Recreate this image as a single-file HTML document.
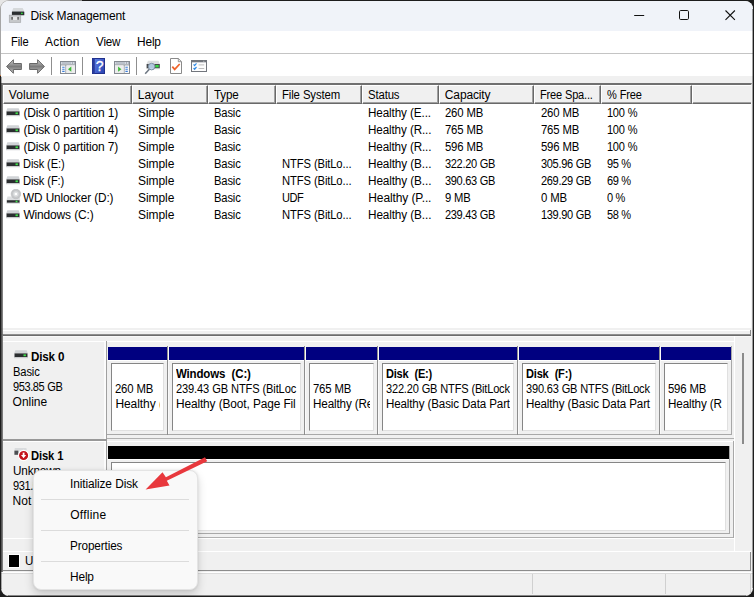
<!DOCTYPE html>
<html lang="en">
<head>
<meta charset="utf-8">
<title>Disk Management</title>
<style>
html,body{margin:0;padding:0;}
body{width:754px;height:597px;overflow:hidden;background:#1d1d1d;font-family:"Liberation Sans",sans-serif;font-size:12px;color:#000;position:relative;}
div,span,svg,i,u{position:absolute;box-sizing:border-box;display:block;}
span{white-space:nowrap;line-height:16px;}
#bgl{left:0;top:0;width:20px;height:76px;background:#e6e6e6;}
#bgt{left:0;top:0;width:60px;height:10px;background:#e6e6e6;}
#bgt2{left:60px;top:0;width:22px;height:1px;background:#8c8c8c;}
#bgr{left:0;top:0;width:60px;height:75px;border-top-left-radius:9px;border-left:1px solid #a6a6a6;border-top:1px solid #b2b2b2;}
#bgo{left:0;top:75px;width:1px;height:1px;background:#c87a3c;}
#winbg{left:1px;top:1px;width:752px;height:595px;background:#f0f0f0;border-radius:8px;overflow:hidden;}
#title{left:0;top:0;width:752px;height:30px;background:#f0f3f9;}
#menubar{left:1px;top:31px;width:752px;height:22px;background:#fff;}
#tbline{left:1px;top:53px;width:752px;height:1px;background:#c4c4c4;}
#toolbar{left:1px;top:54px;width:752px;height:22px;background:#fff;}
.tsep{top:57px;width:1px;height:18px;background:#8f8f8f;}
#list{left:1px;top:83px;width:751px;height:245px;background:#fff;border-left:2px solid #808080;border-top:2px solid #707070;border-right:1px solid #f4f4f4;}
.hc{top:85px;height:19px;background:#f0f0f0;border-top:1px solid #fff;border-left:1px solid #fff;border-right:1px solid #696969;border-bottom:1px solid #696969;}
.hc i{left:0;top:0;right:0;bottom:0;border-right:1px solid #a0a0a0;border-bottom:1px solid #a0a0a0;}
b,.b{font-weight:bold;}
#lower{left:1px;top:334px;width:752px;height:217px;background:#f0f0f0;border-top:2px solid #6c6c6c;border-left:2px solid #7a7a7a;}
#lowtop{left:3px;top:334px;width:748px;height:1px;background:#8e8e8e;}
#lowhi{left:3px;top:336px;width:748px;height:1px;background:#f9f9f9;}
.wl{background:#fff;height:1px;}
.dl{left:3px;width:103px;background:#f0f0f0;border-right:2px solid #fbfbfb;}
.gl{background:#a0a0a0;}
.ph{background:#000080;height:13px;}
.pi{background:#fff;border-left:1px solid #858585;border-top:1px solid #858585;border-right:1px solid #e0e0e0;border-bottom:1px solid #e0e0e0;}
.pc{overflow:hidden;height:60px;}
#menu{left:33px;top:470px;width:165px;height:120px;background:#f9f9f9;border:1px solid #e4e4e4;border-radius:8px;box-shadow:0 5px 10px rgba(0,0,0,0.16),0 0 3px rgba(0,0,0,0.10);}
#menu u{left:7px;width:148px;height:1px;background:#dcdcdc;}
</style>
</head>
<body>
<div id="bgl"></div><div id="bgt"></div><div id="bgt2"></div><div id="bgr"></div><div id="bgo"></div>
<div id="winbg"><div id="title"></div></div>
<svg style="left:8px;top:7px" width="17" height="17" viewBox="0 0 17 17"><path d="M5.300 1h9.400l1.600 3.600H3.900z" fill="#d6d9db"/><rect x="3.900" y="4.500" width="12.400" height="3.700" rx="0.500" fill="#2b2e30"/><circle cx="13.900" cy="6.300" r="0.900" fill="#2fe23a"/><rect x="1.200" y="8.100" width="11.600" height="7.400" fill="#c6c8ca" stroke="#9a9c9e" stroke-width="0.500"/><rect x="3.500" y="10" width="1.300" height="2.700" fill="#3a3a3a"/><rect x="9.300" y="10" width="1.300" height="2.700" fill="#3a3a3a"/><rect x="4.800" y="9.700" width="4.500" height="3.300" fill="#e4e5e6"/></svg>
<span style="left:30.5px;top:8px;line-height:16px;letter-spacing:-0.15px;word-spacing:0.15px;">Disk Management</span>
<svg style="left:631px;top:8px" width="110" height="14" viewBox="0 0 110 14"><path d="M3.200 7.500h10" stroke="#111" stroke-width="1" fill="none"/><rect x="48.500" y="2.500" width="9" height="9" rx="1.200" stroke="#111" stroke-width="1" fill="none"/><path d="M94.500 2.500l9.400 9.400M103.900 2.500l-9.400 9.400" stroke="#111" stroke-width="1.100" fill="none"/></svg>
<div id="menubar"></div>
<span style="left:11px;top:34px;line-height:16px;letter-spacing:-0.14px;transform:scaleX(0.930);transform-origin:0 0;">File</span><span style="left:45px;top:34px;line-height:16px;letter-spacing:0.19px;">Action</span><span style="left:96px;top:34px;line-height:16px;letter-spacing:-0.18px;transform:scaleX(0.970);transform-origin:0 0;">View</span><span style="left:137px;top:34px;line-height:16px;letter-spacing:-0.17px;transform:scaleX(0.992);transform-origin:0 0;">Help</span>
<div id="tbline"></div>
<div id="toolbar"></div>
<svg style="left:6px;top:59px" width="16" height="15" viewBox="0 0 16 15"><defs><linearGradient id="ag6" x1="0" y1="0" x2="0" y2="1"><stop offset="0.1" stop-color="#c2c2c2"/><stop offset="0.5" stop-color="#7c7c7c"/><stop offset="0.9" stop-color="#b6b6b6"/></linearGradient></defs><path d="M0.600 7.500L7.400 0.700V4.500H15.400V10.500H7.400V14.300Z" fill="url(#ag6)" stroke="#686868" stroke-width="1" stroke-linejoin="miter"/></svg>
<svg style="left:29px;top:59px" width="16" height="15" viewBox="0 0 16 15"><defs><linearGradient id="ag29" x1="0" y1="0" x2="0" y2="1"><stop offset="0.1" stop-color="#c2c2c2"/><stop offset="0.5" stop-color="#7c7c7c"/><stop offset="0.9" stop-color="#b6b6b6"/></linearGradient></defs><path transform="translate(16,0) scale(-1,1)" d="M0.600 7.500L7.400 0.700V4.500H15.400V10.500H7.400V14.300Z" fill="url(#ag29)" stroke="#686868" stroke-width="1" stroke-linejoin="miter"/></svg>
<div class="tsep" style="left:51px"></div><div class="tsep" style="left:82px"></div><div class="tsep" style="left:136px"></div>
<svg style="left:60px;top:61px" width="16" height="13" viewBox="0 0 16 13"><rect x="0.5" y="0.5" width="15" height="12" fill="#fbfbfc" stroke="#858a92"/><rect x="1" y="1" width="14" height="2.500" fill="#d3d8e0"/><path d="M2 2h9" stroke="#9ba1ab" stroke-width="0.800"/><path d="M12 2h1M14 2h0.800" stroke="#7e848e" stroke-width="1"/><path d="M1 3.900h14M5.900 4v8.500" stroke="#858a92" stroke-width="0.900" fill="none"/><rect x="6.400" y="4.400" width="8.600" height="7.600" fill="#ededed"/><path d="M11.300 5.600v5.200L8 8.200z" fill="#3db838"/><path d="M2.200 6.200h2.400M2.200 8.300h2.400M2.200 10.400h2.400" stroke="#3b7dd8" stroke-width="1.100"/></svg>
<svg style="left:92px;top:58px" width="13" height="16" viewBox="0 0 13 16"><defs><linearGradient id="hg" x1="0" y1="0" x2="1" y2="0.600"><stop offset="0" stop-color="#6487ea"/><stop offset="1" stop-color="#2f49b8"/></linearGradient></defs><rect x="0.500" y="0.500" width="12" height="15" fill="url(#hg)" stroke="#20308c"/><rect x="0.500" y="0.500" width="2.300" height="15" fill="#2a3c9c"/><text x="7.600" y="13" font-family="Liberation Sans, sans-serif" font-size="14" fill="#fff" stroke="#fff" stroke-width="0.300" text-anchor="middle">?</text></svg>
<svg style="left:114px;top:61px" width="16" height="13" viewBox="0 0 16 13"><rect x="0.5" y="0.5" width="15" height="12" fill="#fbfbfc" stroke="#858a92"/><rect x="1" y="1" width="14" height="2.500" fill="#d3d8e0"/><path d="M2 2h9" stroke="#9ba1ab" stroke-width="0.800"/><path d="M12 2h1M14 2h0.800" stroke="#7e848e" stroke-width="1"/><path d="M1 3.900h14M10.100 4v8.500" stroke="#858a92" stroke-width="0.900" fill="none"/><rect x="1" y="4.400" width="8.600" height="7.600" fill="#ededed"/><path d="M4.100 5.600v5.200l3.300-2.600z" fill="#3db838"/><path d="M11.400 6.200h2.400M11.400 8.300h2.400M11.400 10.400h2.400" stroke="#3b7dd8" stroke-width="1.100"/></svg>
<svg style="left:144px;top:59px" width="17" height="16" viewBox="0 0 17 16"><path d="M4 1.800h10.500l1.300 3.200H2.600z" fill="#dcdee0"/><rect x="2.600" y="5" width="13.200" height="4.400" fill="#45484b"/><rect x="2.600" y="9.400" width="13.200" height="0.800" fill="#c9cbcd"/><rect x="11.300" y="6" width="3.400" height="2.400" fill="#35d943"/><circle cx="7.600" cy="7.600" r="3.300" fill="#bcd6ee" fill-opacity="0.900" stroke="#7d8fa3" stroke-width="1"/><path d="M5.300 10.300L1.200 14.800" stroke="#6d7682" stroke-width="1.500"/></svg>
<svg style="left:170px;top:58px" width="12" height="16" viewBox="0 0 12 16"><path d="M0.500 0.500h7.800l3.200 3.200V15.500H0.500z" fill="#fff" stroke="#8a8a8a"/><path d="M8.300 0.500V3.700h3.200" fill="none" stroke="#8a8a8a" stroke-width="0.900"/><path d="M2.300 8.600l2.400 2.800L9.700 6" fill="none" stroke="#f0642b" stroke-width="1.700"/></svg>
<svg style="left:191px;top:60px" width="16" height="12" viewBox="0 0 16 12"><rect x="0.500" y="0.500" width="15" height="11" fill="#fdfdfd" stroke="#72767d"/><rect x="0.500" y="0.500" width="15" height="1.800" fill="#72767d"/><path d="M12.300 1.300h1" stroke="#d8dade" stroke-width="0.800"/><path d="M2.600 4.400l1 1.200 1.900-2.200M2.600 8l1 1.200 1.900-2.200" fill="none" stroke="#2f8ae6" stroke-width="1.200"/><path d="M7.600 4.900h5.600M7.600 8.500h5.600" stroke="#bdbdbd" stroke-width="1"/></svg>
<div id="list"></div>
<div class="hc" style="left:3px;width:129px"><i></i><span style="left:4.8px;top:1px;line-height:16px;letter-spacing:0.05px;">Volume</span></div>
<div class="hc" style="left:132px;width:76px"><i></i><span style="left:4.8px;top:1px;line-height:16px;letter-spacing:-0.05px;">Layout</span></div>
<div class="hc" style="left:208px;width:68px"><i></i><span style="left:4.8px;top:1px;line-height:16px;letter-spacing:-0.18px;transform:scaleX(0.969);transform-origin:0 0;">Type</span></div>
<div class="hc" style="left:276px;width:86px"><i></i><span style="left:4.8px;top:1px;line-height:16px;letter-spacing:-0.15px;word-spacing:0.15px;transform:scaleX(0.948);transform-origin:0 0;">File System</span></div>
<div class="hc" style="left:362px;width:77px"><i></i><span style="left:4.8px;top:1px;line-height:16px;letter-spacing:-0.14px;transform:scaleX(0.946);transform-origin:0 0;">Status</span></div>
<div class="hc" style="left:439px;width:95px"><i></i><span style="left:4.8px;top:1px;line-height:16px;letter-spacing:-0.13px;">Capacity</span></div>
<div class="hc" style="left:534px;width:67px"><i></i><span style="left:4.8px;top:1px;line-height:16px;letter-spacing:-0.21px;word-spacing:0.21px;transform:scaleX(0.920);transform-origin:0 0;">Free Spa...</span></div>
<div class="hc" style="left:601px;width:91px"><i></i><span style="left:4.8px;top:1px;line-height:16px;letter-spacing:-0.22px;word-spacing:0.22px;transform:scaleX(0.920);transform-origin:0 0;">% Free</span></div>
<div class="hc" style="left:692px;width:59px;border-right:none"><i style="border-right:none"></i></div>
<svg style="left:6px;top:108px" width="14" height="9" viewBox="0 0 14 9"><path d="M1.3 0.2h11.4l1.1 3.4H0.2z" fill="#d0d3d6"/><rect x="0.500" y="3.400" width="13" height="3.700" fill="#2b2e30"/><rect x="9.500" y="4.400" width="2.400" height="1.800" fill="#3fe24a"/><rect x="0" y="7.100" width="14" height="1.100" fill="#c6c8ca"/></svg>
<span style="left:23.4px;top:105px;line-height:17px;letter-spacing:-0.15px;word-spacing:0.15px;">(Disk 0 partition 1)</span>
<span style="left:138.1px;top:105px;line-height:17px;letter-spacing:-0.08px;">Simple</span>
<span style="left:214.4px;top:105px;line-height:17px;letter-spacing:-0.16px;transform:scaleX(0.933);transform-origin:0 0;">Basic</span>
<span style="left:368.3px;top:105px;line-height:17px;letter-spacing:-0.12px;word-spacing:0.12px;transform:scaleX(0.974);transform-origin:0 0;">Healthy (E...</span>
<span style="left:445.2px;top:105px;line-height:17px;letter-spacing:-0.22px;word-spacing:0.22px;transform:scaleX(0.946);transform-origin:0 0;">260 MB</span>
<span style="left:541.4px;top:105px;line-height:17px;letter-spacing:-0.22px;word-spacing:0.22px;transform:scaleX(0.946);transform-origin:0 0;">260 MB</span>
<span style="left:607.4px;top:105px;line-height:17px;letter-spacing:-0.29px;word-spacing:0.29px;transform:scaleX(0.920);transform-origin:0 0;">100 %</span>
<svg style="left:6px;top:125px" width="14" height="9" viewBox="0 0 14 9"><path d="M1.3 0.2h11.4l1.1 3.4H0.2z" fill="#d0d3d6"/><rect x="0.500" y="3.400" width="13" height="3.700" fill="#2b2e30"/><rect x="9.500" y="4.400" width="2.400" height="1.800" fill="#3fe24a"/><rect x="0" y="7.100" width="14" height="1.100" fill="#c6c8ca"/></svg>
<span style="left:23.4px;top:122px;line-height:17px;letter-spacing:-0.15px;word-spacing:0.15px;">(Disk 0 partition 4)</span>
<span style="left:138.1px;top:122px;line-height:17px;letter-spacing:-0.08px;">Simple</span>
<span style="left:214.4px;top:122px;line-height:17px;letter-spacing:-0.16px;transform:scaleX(0.933);transform-origin:0 0;">Basic</span>
<span style="left:368.3px;top:122px;line-height:17px;letter-spacing:-0.12px;word-spacing:0.12px;transform:scaleX(0.971);transform-origin:0 0;">Healthy (R...</span>
<span style="left:445.2px;top:122px;line-height:17px;letter-spacing:-0.22px;word-spacing:0.22px;transform:scaleX(0.946);transform-origin:0 0;">765 MB</span>
<span style="left:541.4px;top:122px;line-height:17px;letter-spacing:-0.22px;word-spacing:0.22px;transform:scaleX(0.946);transform-origin:0 0;">765 MB</span>
<span style="left:607.4px;top:122px;line-height:17px;letter-spacing:-0.29px;word-spacing:0.29px;transform:scaleX(0.920);transform-origin:0 0;">100 %</span>
<svg style="left:6px;top:142px" width="14" height="9" viewBox="0 0 14 9"><path d="M1.3 0.2h11.4l1.1 3.4H0.2z" fill="#d0d3d6"/><rect x="0.500" y="3.400" width="13" height="3.700" fill="#2b2e30"/><rect x="9.500" y="4.400" width="2.400" height="1.800" fill="#3fe24a"/><rect x="0" y="7.100" width="14" height="1.100" fill="#c6c8ca"/></svg>
<span style="left:23.4px;top:139px;line-height:17px;letter-spacing:-0.15px;word-spacing:0.15px;">(Disk 0 partition 7)</span>
<span style="left:138.1px;top:139px;line-height:17px;letter-spacing:-0.08px;">Simple</span>
<span style="left:214.4px;top:139px;line-height:17px;letter-spacing:-0.16px;transform:scaleX(0.933);transform-origin:0 0;">Basic</span>
<span style="left:368.3px;top:139px;line-height:17px;letter-spacing:-0.12px;word-spacing:0.12px;transform:scaleX(0.971);transform-origin:0 0;">Healthy (R...</span>
<span style="left:445.2px;top:139px;line-height:17px;letter-spacing:-0.22px;word-spacing:0.22px;transform:scaleX(0.946);transform-origin:0 0;">596 MB</span>
<span style="left:541.4px;top:139px;line-height:17px;letter-spacing:-0.22px;word-spacing:0.22px;transform:scaleX(0.946);transform-origin:0 0;">596 MB</span>
<span style="left:607.4px;top:139px;line-height:17px;letter-spacing:-0.29px;word-spacing:0.29px;transform:scaleX(0.920);transform-origin:0 0;">100 %</span>
<svg style="left:6px;top:159px" width="14" height="9" viewBox="0 0 14 9"><path d="M1.3 0.2h11.4l1.1 3.4H0.2z" fill="#d0d3d6"/><rect x="0.500" y="3.400" width="13" height="3.700" fill="#2b2e30"/><rect x="9.500" y="4.400" width="2.400" height="1.800" fill="#3fe24a"/><rect x="0" y="7.100" width="14" height="1.100" fill="#c6c8ca"/></svg>
<span style="left:23.4px;top:156px;line-height:17px;letter-spacing:-0.14px;word-spacing:0.14px;transform:scaleX(0.924);transform-origin:0 0;">Disk (E:)</span>
<span style="left:138.1px;top:156px;line-height:17px;letter-spacing:-0.08px;">Simple</span>
<span style="left:214.4px;top:156px;line-height:17px;letter-spacing:-0.16px;transform:scaleX(0.933);transform-origin:0 0;">Basic</span>
<span style="left:282.2px;top:156px;line-height:17px;letter-spacing:-0.14px;word-spacing:0.14px;transform:scaleX(0.936);transform-origin:0 0;">NTFS (BitLo...</span>
<span style="left:368.3px;top:156px;line-height:17px;letter-spacing:-0.12px;word-spacing:0.12px;transform:scaleX(0.980);transform-origin:0 0;">Healthy (B...</span>
<span style="left:445.2px;top:156px;line-height:17px;letter-spacing:-0.37px;word-spacing:0.37px;transform:scaleX(0.920);transform-origin:0 0;">322.20 GB</span>
<span style="left:541.4px;top:156px;line-height:17px;letter-spacing:-0.37px;word-spacing:0.37px;transform:scaleX(0.920);transform-origin:0 0;">305.96 GB</span>
<span style="left:607.4px;top:156px;line-height:17px;letter-spacing:-0.53px;word-spacing:0.53px;transform:scaleX(0.920);transform-origin:0 0;">95 %</span>
<svg style="left:6px;top:176px" width="14" height="9" viewBox="0 0 14 9"><path d="M1.3 0.2h11.4l1.1 3.4H0.2z" fill="#d0d3d6"/><rect x="0.500" y="3.400" width="13" height="3.700" fill="#2b2e30"/><rect x="9.500" y="4.400" width="2.400" height="1.800" fill="#3fe24a"/><rect x="0" y="7.100" width="14" height="1.100" fill="#c6c8ca"/></svg>
<span style="left:23.4px;top:173px;line-height:17px;letter-spacing:-0.14px;word-spacing:0.14px;transform:scaleX(0.931);transform-origin:0 0;">Disk (F:)</span>
<span style="left:138.1px;top:173px;line-height:17px;letter-spacing:-0.08px;">Simple</span>
<span style="left:214.4px;top:173px;line-height:17px;letter-spacing:-0.16px;transform:scaleX(0.933);transform-origin:0 0;">Basic</span>
<span style="left:282.2px;top:173px;line-height:17px;letter-spacing:-0.14px;word-spacing:0.14px;transform:scaleX(0.936);transform-origin:0 0;">NTFS (BitLo...</span>
<span style="left:368.3px;top:173px;line-height:17px;letter-spacing:-0.12px;word-spacing:0.12px;transform:scaleX(0.980);transform-origin:0 0;">Healthy (B...</span>
<span style="left:445.2px;top:173px;line-height:17px;letter-spacing:-0.37px;word-spacing:0.37px;transform:scaleX(0.920);transform-origin:0 0;">390.63 GB</span>
<span style="left:541.4px;top:173px;line-height:17px;letter-spacing:-0.37px;word-spacing:0.37px;transform:scaleX(0.920);transform-origin:0 0;">269.29 GB</span>
<span style="left:607.4px;top:173px;line-height:17px;letter-spacing:-0.53px;word-spacing:0.53px;transform:scaleX(0.920);transform-origin:0 0;">69 %</span>
<svg style="left:6px;top:189px" width="15" height="15" viewBox="0 0 15 15"><path d="M1.500 7.500h12l0.800 3.700H0.500z" fill="#dcdee0"/><rect x="0.800" y="11.200" width="12.800" height="2.600" fill="#2b2e30"/><rect x="9.600" y="11.700" width="1.900" height="1.600" fill="#3fe24a"/><rect x="0.400" y="13.800" width="13.600" height="0.800" fill="#d0d2d4"/><circle cx="9.900" cy="5" r="4.800" fill="#c6c8ca" stroke="#b2b4b6" stroke-width="0.500"/><circle cx="9.900" cy="5" r="2.700" fill="#dddfe1"/><circle cx="9.900" cy="5" r="1.300" fill="#fff"/></svg>
<span style="left:23.4px;top:190px;line-height:17px;letter-spacing:-0.15px;word-spacing:0.15px;transform:scaleX(0.983);transform-origin:0 0;">WD Unlocker (D:)</span>
<span style="left:138.1px;top:190px;line-height:17px;letter-spacing:-0.08px;">Simple</span>
<span style="left:214.4px;top:190px;line-height:17px;letter-spacing:-0.16px;transform:scaleX(0.933);transform-origin:0 0;">Basic</span>
<span style="left:282.2px;top:190px;line-height:17px;letter-spacing:-0.54px;transform:scaleX(0.920);transform-origin:0 0;">UDF</span>
<span style="left:368.3px;top:190px;line-height:17px;letter-spacing:-0.12px;word-spacing:0.12px;">Healthy (P...</span>
<span style="left:445.2px;top:190px;line-height:17px;letter-spacing:-0.30px;word-spacing:0.30px;transform:scaleX(0.937);transform-origin:0 0;">9 MB</span>
<span style="left:541.4px;top:190px;line-height:17px;letter-spacing:-0.30px;word-spacing:0.30px;transform:scaleX(0.948);transform-origin:0 0;">0 MB</span>
<span style="left:607.4px;top:190px;line-height:17px;letter-spacing:-0.69px;word-spacing:0.69px;transform:scaleX(0.920);transform-origin:0 0;">0 %</span>
<svg style="left:6px;top:210px" width="14" height="9" viewBox="0 0 14 9"><path d="M1.3 0.2h11.4l1.1 3.4H0.2z" fill="#d0d3d6"/><rect x="0.500" y="3.400" width="13" height="3.700" fill="#2b2e30"/><rect x="9.500" y="4.400" width="2.400" height="1.800" fill="#3fe24a"/><rect x="0" y="7.100" width="14" height="1.100" fill="#c6c8ca"/></svg>
<span style="left:23.4px;top:207px;line-height:17px;letter-spacing:-0.17px;word-spacing:0.17px;">Windows (C:)</span>
<span style="left:138.1px;top:207px;line-height:17px;letter-spacing:-0.08px;">Simple</span>
<span style="left:214.4px;top:207px;line-height:17px;letter-spacing:-0.16px;transform:scaleX(0.933);transform-origin:0 0;">Basic</span>
<span style="left:282.2px;top:207px;line-height:17px;letter-spacing:-0.14px;word-spacing:0.14px;transform:scaleX(0.936);transform-origin:0 0;">NTFS (BitLo...</span>
<span style="left:368.3px;top:207px;line-height:17px;letter-spacing:-0.12px;word-spacing:0.12px;transform:scaleX(0.980);transform-origin:0 0;">Healthy (B...</span>
<span style="left:445.2px;top:207px;line-height:17px;letter-spacing:-0.37px;word-spacing:0.37px;transform:scaleX(0.920);transform-origin:0 0;">239.43 GB</span>
<span style="left:541.4px;top:207px;line-height:17px;letter-spacing:-0.37px;word-spacing:0.37px;transform:scaleX(0.920);transform-origin:0 0;">139.90 GB</span>
<span style="left:607.4px;top:207px;line-height:17px;letter-spacing:-0.53px;word-spacing:0.53px;transform:scaleX(0.920);transform-origin:0 0;">58 %</span>
<div class="wl" style="left:3px;top:330px;width:748px"></div>
<div style="left:1px;top:328px;width:2px;height:6px;background:#7c7c7c"></div>
<div id="lower"></div><div id="lowtop"></div><div id="lowhi"></div>
<div style="left:750px;top:330px;width:1px;height:5px;background:#8a8a8a"></div><div style="left:751px;top:334px;width:2px;height:2px;background:#f0f0f0"></div>
<div class="wl" style="left:3px;top:341px;width:731px"></div>
<div class="dl" style="top:342px;height:97px"></div>
<div class="gl" style="left:106px;top:341px;width:1px;height:98px"></div>
<div class="gl" style="left:107px;top:438px;width:627px;height:1px;background:#b0b0b0"></div>
<div class="gl" style="left:3px;top:439px;width:104px;height:2px;background:#989898"></div>
<div class="wl" style="left:3px;top:441px;width:731px"></div>
<div class="dl" style="top:442px;height:96px"></div>
<div class="gl" style="left:106px;top:441px;width:1px;height:97px"></div>
<div class="gl" style="left:107px;top:537px;width:627px;height:1px;background:#b0b0b0"></div>
<div class="wl" style="left:3px;top:538px;width:731px"></div>
<div class="gl" style="left:733px;top:441px;width:1px;height:97px;background:#a8a8a8"></div>
<div class="ph" style="left:108px;top:347px;width:59px;background:#000080"></div>
<div class="gl" style="left:107px;top:434px;width:61px;height:1px;background:#a8a8a8"></div>
<div class="gl" style="left:167px;top:346px;width:1px;height:89px;background:#8e8e8e"></div>
<div class="wl" style="left:168px;top:346px;width:1px;height:89px;background:#fafafa"></div>
<div class="wl" style="left:108px;top:360px;width:59px;background:#fff"></div>
<div class="pi" style="left:111px;top:363px;width:53px;height:68px"></div>
<div class="pc" style="left:113px;top:365px;width:46.5px">
<span style="left:2.4px;top:17px;line-height:15px;letter-spacing:-0.22px;word-spacing:0.22px;transform:scaleX(0.946);transform-origin:0 0;">260 MB</span><span style="left:2.4px;top:32px;line-height:15px;letter-spacing:-0.06px;">Healthy (</span>
</div>
<div class="ph" style="left:169px;top:347px;width:135px;background:#000080"></div>
<div class="gl" style="left:168px;top:434px;width:137px;height:1px;background:#a8a8a8"></div>
<div class="gl" style="left:304px;top:346px;width:1px;height:89px;background:#8e8e8e"></div>
<div class="wl" style="left:305px;top:346px;width:1px;height:89px;background:#fafafa"></div>
<div class="wl" style="left:169px;top:360px;width:135px;background:#fff"></div>
<div class="pi" style="left:172px;top:363px;width:129px;height:68px"></div>
<div class="pc" style="left:174px;top:365px;width:122.5px">
<span class="b" style="left:2.4px;top:2px;line-height:15px;letter-spacing:-0.17px;word-spacing:0.17px;transform:scaleX(0.958);transform-origin:0 0;">Windows&nbsp; (C:)</span>
<span style="left:2.4px;top:17px;line-height:15px;letter-spacing:-0.16px;word-spacing:0.16px;transform:scaleX(0.926);transform-origin:0 0;">239.43 GB NTFS (BitLoc</span><span style="left:2.4px;top:32px;line-height:15px;letter-spacing:-0.13px;word-spacing:0.13px;transform:scaleX(0.990);transform-origin:0 0;">Healthy (Boot, Page Fil</span>
</div>
<div class="ph" style="left:306px;top:347px;width:71px;background:#000080"></div>
<div class="gl" style="left:305px;top:434px;width:73px;height:1px;background:#a8a8a8"></div>
<div class="gl" style="left:377px;top:346px;width:1px;height:89px;background:#8e8e8e"></div>
<div class="wl" style="left:378px;top:346px;width:1px;height:89px;background:#fafafa"></div>
<div class="wl" style="left:306px;top:360px;width:71px;background:#fff"></div>
<div class="pi" style="left:309px;top:363px;width:65px;height:68px"></div>
<div class="pc" style="left:311px;top:365px;width:58.5px">
<span style="left:2.4px;top:17px;line-height:15px;letter-spacing:-0.22px;word-spacing:0.22px;transform:scaleX(0.946);transform-origin:0 0;">765 MB</span><span style="left:2.4px;top:32px;line-height:15px;letter-spacing:-0.15px;word-spacing:0.15px;transform:scaleX(0.973);transform-origin:0 0;">Healthy (Re</span>
</div>
<div class="ph" style="left:379px;top:347px;width:138px;background:#000080"></div>
<div class="gl" style="left:378px;top:434px;width:140px;height:1px;background:#a8a8a8"></div>
<div class="gl" style="left:517px;top:346px;width:1px;height:89px;background:#8e8e8e"></div>
<div class="wl" style="left:518px;top:346px;width:1px;height:89px;background:#fafafa"></div>
<div class="wl" style="left:379px;top:360px;width:138px;background:#fff"></div>
<div class="pi" style="left:382px;top:363px;width:132px;height:68px"></div>
<div class="pc" style="left:384px;top:365px;width:125.5px">
<span class="b" style="left:2.4px;top:2px;line-height:15px;letter-spacing:-0.27px;word-spacing:0.27px;transform:scaleX(0.920);transform-origin:0 0;">Disk&nbsp; (E:)</span>
<span style="left:2.4px;top:17px;line-height:15px;letter-spacing:-0.21px;word-spacing:0.21px;transform:scaleX(0.920);transform-origin:0 0;">322.20 GB NTFS (BitLock</span><span style="left:2.4px;top:32px;line-height:15px;letter-spacing:-0.14px;word-spacing:0.14px;transform:scaleX(0.965);transform-origin:0 0;">Healthy (Basic Data Part</span>
</div>
<div class="ph" style="left:519px;top:347px;width:140px;background:#000080"></div>
<div class="gl" style="left:518px;top:434px;width:142px;height:1px;background:#a8a8a8"></div>
<div class="gl" style="left:659px;top:346px;width:1px;height:89px;background:#8e8e8e"></div>
<div class="wl" style="left:660px;top:346px;width:1px;height:89px;background:#fafafa"></div>
<div class="wl" style="left:519px;top:360px;width:140px;background:#fff"></div>
<div class="pi" style="left:522px;top:363px;width:134px;height:68px"></div>
<div class="pc" style="left:524px;top:365px;width:127.5px">
<span class="b" style="left:2.4px;top:2px;line-height:15px;letter-spacing:-0.22px;word-spacing:0.22px;transform:scaleX(0.920);transform-origin:0 0;">Disk&nbsp; (F:)</span>
<span style="left:2.4px;top:17px;line-height:15px;letter-spacing:-0.21px;word-spacing:0.21px;transform:scaleX(0.920);transform-origin:0 0;">390.63 GB NTFS (BitLock</span><span style="left:2.4px;top:32px;line-height:15px;letter-spacing:-0.14px;word-spacing:0.14px;transform:scaleX(0.965);transform-origin:0 0;">Healthy (Basic Data Part</span>
</div>
<div class="ph" style="left:661px;top:347px;width:70px;background:#000080"></div>
<div class="gl" style="left:660px;top:434px;width:72px;height:1px;background:#a8a8a8"></div>
<div class="gl" style="left:731px;top:346px;width:1px;height:89px;background:#a8a8a8"></div>
<div class="wl" style="left:661px;top:360px;width:70px;background:#fff"></div>
<div class="pi" style="left:664px;top:363px;width:64px;height:68px"></div>
<div class="pc" style="left:666px;top:365px;width:57.5px">
<span style="left:2.4px;top:17px;line-height:15px;letter-spacing:-0.22px;word-spacing:0.22px;transform:scaleX(0.946);transform-origin:0 0;">596 MB</span><span style="left:2.4px;top:32px;line-height:15px;letter-spacing:-0.15px;word-spacing:0.15px;transform:scaleX(0.973);transform-origin:0 0;">Healthy (R</span>
</div>
<div class="ph" style="left:108px;top:446px;width:621px;background:#000"></div>
<div class="gl" style="left:107px;top:533px;width:623px;height:1px;background:#a8a8a8"></div>
<div class="gl" style="left:729px;top:446px;width:1px;height:88px;background:#a8a8a8"></div>
<div class="wl" style="left:108px;top:459px;width:621px;background:#fff"></div>
<div class="pi" style="left:111px;top:462px;width:615px;height:69px"></div>
<svg style="left:14px;top:350px" width="14" height="9" viewBox="0 0 14 9"><path d="M1.3 0.2h11.4l1.1 3.4H0.2z" fill="#d0d3d6"/><rect x="0.500" y="3.400" width="13" height="3.700" fill="#2b2e30"/><rect x="9.500" y="4.400" width="2.400" height="1.800" fill="#3fe24a"/><rect x="0" y="7.100" width="14" height="1.100" fill="#c6c8ca"/></svg>
<span class="b" style="left:30.7px;top:349px;line-height:16px;letter-spacing:-0.18px;word-spacing:0.18px;transform:scaleX(0.970);transform-origin:0 0;">Disk 0</span><span style="left:12.6px;top:365px;line-height:15px;letter-spacing:-0.16px;transform:scaleX(0.933);transform-origin:0 0;">Basic</span><span style="left:12.6px;top:380px;line-height:15px;letter-spacing:-0.45px;word-spacing:0.45px;transform:scaleX(0.920);transform-origin:0 0;">953.85 GB</span><span style="left:12.6px;top:395px;line-height:15px;letter-spacing:-0.04px;">Online</span>
<svg style="left:14px;top:448px" width="17" height="14" viewBox="0 0 17 14"><path d="M0.800 0h11.600l0.600 2.600H0.400z" fill="#d9dbdd"/><rect x="0.400" y="2.600" width="4" height="4.200" fill="#4c4f52"/><circle cx="9.600" cy="7.500" r="5.100" fill="#c4121b" stroke="#fff" stroke-width="1.100"/><path d="M7 6.900h5.200l-2.600 3.300z" fill="#fff"/><rect x="8.700" y="4.600" width="1.800" height="2.700" fill="#fff"/></svg>
<span class="b" style="left:30.7px;top:448px;line-height:16px;letter-spacing:-0.19px;word-spacing:0.19px;transform:scaleX(0.936);transform-origin:0 0;">Disk 1</span><span style="left:12.6px;top:464px;line-height:15px;letter-spacing:-0.17px;transform:scaleX(0.979);transform-origin:0 0;">Unknown</span><span style="left:12.6px;top:479px;line-height:15px;letter-spacing:-0.45px;word-spacing:0.45px;transform:scaleX(0.920);transform-origin:0 0;">931.50 GB</span><span style="left:12.6px;top:494px;line-height:15px;letter-spacing:-0.00px;">Not Initialized</span>
<div style="left:742px;top:353px;width:2px;height:91px;background:#8b8b8b"></div>
<div class="wl" style="left:734px;top:336px;width:1px;height:215px"></div>
<div class="wl" style="left:3px;top:551px;width:748px"></div><div style="left:1px;top:551px;width:2px;height:21px;background:#7a7a7a"></div>
<div style="left:3px;top:552px;width:748px;height:19px;background:#f0f0f0;border-right:1px solid #8c8c8c;border-bottom:1px solid #8c8c8c"></div>
<div style="left:8px;top:554px;width:12px;height:14px;background:#000;border:1px solid #fff"></div>
<span style="left:24.6px;top:553px;line-height:16px;letter-spacing:-0.13px;transform:scaleX(0.967);transform-origin:0 0;">Unallocated</span>
<div class="wl" style="left:1px;top:572px;width:752px"></div><div style="left:1px;top:573px;width:752px;height:1px;background:#dcdcdc"></div>
<div style="left:1px;top:77px;width:1px;height:512px;background:rgba(0,0,0,0.3)"></div>
<div style="left:8px;top:595px;width:738px;height:1px;background:rgba(29,29,29,0.5)"></div><div style="left:752px;top:9px;width:1px;height:579px;background:rgba(29,29,29,0.4)"></div>
<div style="left:532px;top:574px;width:1px;height:20px;background:#d0d0d0"></div><div style="left:665px;top:574px;width:1px;height:20px;background:#d0d0d0"></div><div style="left:750px;top:574px;width:1px;height:20px;background:#d0d0d0"></div>
<div id="menu"><span style="left:36.3px;top:5px;line-height:16px;letter-spacing:-0.11px;word-spacing:0.11px;transform:scaleX(0.991);transform-origin:0 0;">Initialize Disk</span><u style="top:28px"></u><span style="left:36.3px;top:36px;line-height:16px;letter-spacing:0.22px;">Offline</span><u style="top:59px"></u><span style="left:36.3px;top:67px;line-height:16px;letter-spacing:-0.12px;transform:scaleX(0.978);transform-origin:0 0;">Properties</span><u style="top:90px"></u><span style="left:36.3px;top:98px;line-height:16px;letter-spacing:-0.17px;transform:scaleX(0.992);transform-origin:0 0;">Help</span></div>
<svg style="left:140px;top:452px" width="72" height="44" viewBox="140 452 72 44"><path d="M207.200 461.300L205 457.200 165.900 477.300 162.500 472.200 145.600 489.400 169.500 485.500 166.800 480.800Z" fill="#e8383d"/></svg>
</body>
</html>
